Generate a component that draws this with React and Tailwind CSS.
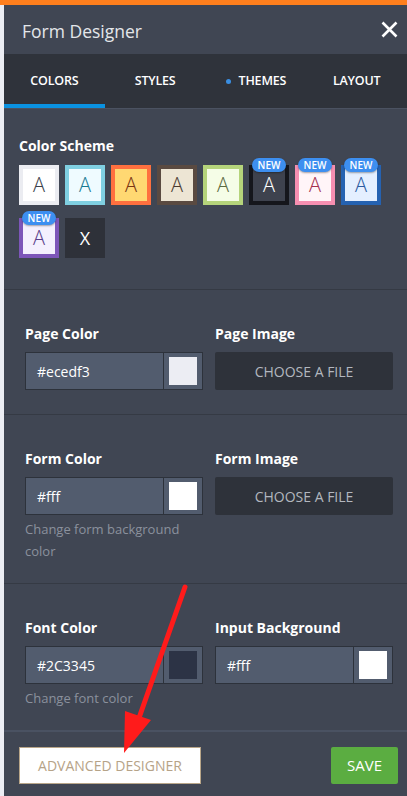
import React from "react";

const swatches = [
  { border: "border-[#ebecf1]", bg: "bg-white", text: "text-[#3b3f4b]" },
  { border: "border-[#7fcfe1]", bg: "bg-[#effbff]", text: "text-[#177a92]" },
  { border: "border-[#ff703f]", bg: "bg-[#ffd872]", text: "text-[#7a3512]" },
  { border: "border-[#5a4a41]", bg: "bg-[#ede5d4]", text: "text-[#4a3a31]" },
  { border: "border-[#b5d47b]", bg: "bg-[#f5fde7]", text: "text-[#5b6a41]" },
  { border: "border-[#15161c]", bg: "bg-[#3e424e]", text: "text-white", isNew: true },
  { border: "border-[#f68fb1]", bg: "bg-[#fff5f8]", text: "text-[#a3304f]", isNew: true },
  { border: "border-[#2562b1]", bg: "bg-[#e4efff]", text: "text-[#2b5ba1]", isNew: true },
  { border: "border-[#7d56b9]", bg: "bg-[#f4f0fe]", text: "text-[#5a3e8b]", isNew: true },
];

const tabs = ["COLORS", "STYLES", "THEMES", "LAYOUT"];

const ColorInput = ({ value, swatch }) => (
  <div className="flex h-[38px] bg-[#525c6e] border border-[#2d323b]">
    <div className="flex-1 flex items-center pl-[11px] text-[14px] text-white">{value}</div>
    <div className="w-[39px] border-l border-[#2d323b] flex items-center justify-center">
      <div className={`w-[28px] h-[28px] ${swatch}`}></div>
    </div>
  </div>
);

const FileButton = () => (
  <div className="h-[38px] bg-[#2e323a] rounded-[2px] flex items-center justify-center text-[14px] text-[#b3b7bf]">
    CHOOSE A FILE
  </div>
);

const Label = ({ children }) => (
  <p className="h-[20px] mb-[8px] text-[14px] font-bold text-white leading-[20px]">{children}</p>
);

const Help = ({ children }) => (
  <p className="mt-[3px] text-[13px] leading-[22px] text-[#8b919d]">{children}</p>
);

const App = () => {
  return (
    <div className="relative min-h-screen bg-[#ecedf3] font-['Open_Sans',sans-serif]">
      <div className="h-[5px] bg-[#ff7f1d]"></div>
      <div className="flex">
        <div className="w-[4px] bg-[#ecedf3]"></div>
        <div className="flex-1 bg-[#404653]">
          {/* Header */}
          <div className="h-[49px] flex items-center justify-between pl-[18px] pr-[9px]">
            <h1 className="text-[17.5px] text-[#e4e6ea] pt-[3px]">Form Designer</h1>
            <svg width="17" height="17" viewBox="0 0 17 17">
              <path d="M1.5 1.5 L15.5 15.5 M15.5 1.5 L1.5 15.5" stroke="#fff" strokeWidth="2.6" />
            </svg>
          </div>

          {/* Tabs */}
          <div className="grid grid-cols-4 h-[55px] bg-[#2f333b] border-b border-[#4b5261]">
            {tabs.map((t, i) => (
              <div
                key={t}
                className={`flex items-center justify-center gap-[8px] text-[12.5px] font-semibold text-white tracking-[-0.2px] border-b-4 pt-[4px] ${i === 0 ? "border-[#0a92e1]" : "border-transparent"}`}
              >
                {i === 2 && <span className="w-[5px] h-[5px] rounded-full bg-[#3a8fe3]"></span>}
                {t}
              </div>
            ))}
          </div>

          {/* Color scheme */}
          <div className="pl-[15px] pt-[27px] pb-[31px]">
            <p className="h-[20px] text-[14px] font-bold text-white leading-[20px] mb-[9px]">Color Scheme</p>
            <div className="flex flex-wrap gap-x-[6px] gap-y-[13px] w-[370px]">
              {swatches.map((s, i) => (
                <div
                  key={i}
                  className={`relative w-[40px] h-[40px] border-4 ${s.border} ${s.bg} flex items-center justify-center`}
                >
                  <span className={`text-[20px] font-light leading-none ${s.text}`}>A</span>
                  {s.isNew && (
                    <span className="absolute top-[-11px] left-1/2 -translate-x-1/2 w-[34px] h-[14px] rounded-full bg-[#3d8ff0] shadow-[0_1px_2px_rgba(0,0,0,0.35)] flex items-center justify-center text-[10px] font-semibold text-white leading-none">
                      NEW
                    </span>
                  )}
                </div>
              ))}
              <div className="w-[40px] h-[40px] bg-[#2e3139] flex items-center justify-center text-[18px] text-white">
                X
              </div>
            </div>
          </div>

          {/* Page */}
          <div className="border-t border-[#353a44] pt-[34px] pb-[24px] pl-[21px] pr-[14px] grid grid-cols-2 gap-x-[12px]">
            <div>
              <Label>Page Color</Label>
              <ColorInput value="#ecedf3" swatch="bg-[#ecedf3]" />
            </div>
            <div>
              <Label>Page Image</Label>
              <FileButton />
            </div>
          </div>

          {/* Form */}
          <div className="border-t border-[#353a44] pt-[34px] pb-[21px] pl-[21px] pr-[14px] grid grid-cols-2 gap-x-[12px]">
            <div>
              <Label>Form Color</Label>
              <ColorInput value="#fff" swatch="bg-white" />
              <Help>Change form background color</Help>
            </div>
            <div>
              <Label>Form Image</Label>
              <FileButton />
            </div>
          </div>

          {/* Font */}
          <div className="border-t border-[#353a44] pt-[34px] pb-[21px] pl-[21px] pr-[14px] grid grid-cols-2 gap-x-[12px]">
            <div>
              <Label>Font Color</Label>
              <ColorInput value="#2C3345" swatch="bg-[#2c3345]" />
              <Help>Change font color</Help>
            </div>
            <div>
              <Label>Input Background</Label>
              <ColorInput value="#fff" swatch="bg-white" />
            </div>
          </div>

          {/* Footer */}
          <div className="border-t-2 border-[#4a5262] pt-[15px] pb-[12px] pl-[15px] pr-[9px] flex justify-between">
            <button className="w-[182px] h-[37px] bg-white border border-[#b9a689] text-[14px] text-[#b6a388]">
              ADVANCED DESIGNER
            </button>
            <button className="w-[67px] h-[37px] bg-[#5bad41] rounded-[2px] text-[15px] text-white">
              SAVE
            </button>
          </div>
        </div>
      </div>

      {/* Annotation arrow */}
      <svg className="absolute inset-0 pointer-events-none" width="407" height="796" viewBox="0 0 407 796">
        <line x1="185" y1="587" x2="139" y2="718" stroke="#ff1b1b" strokeWidth="5" strokeLinecap="round" />
        <polygon points="124,753 125,711 151,720" fill="#ff1b1b" />
      </svg>
    </div>
  );
};

export default App;
